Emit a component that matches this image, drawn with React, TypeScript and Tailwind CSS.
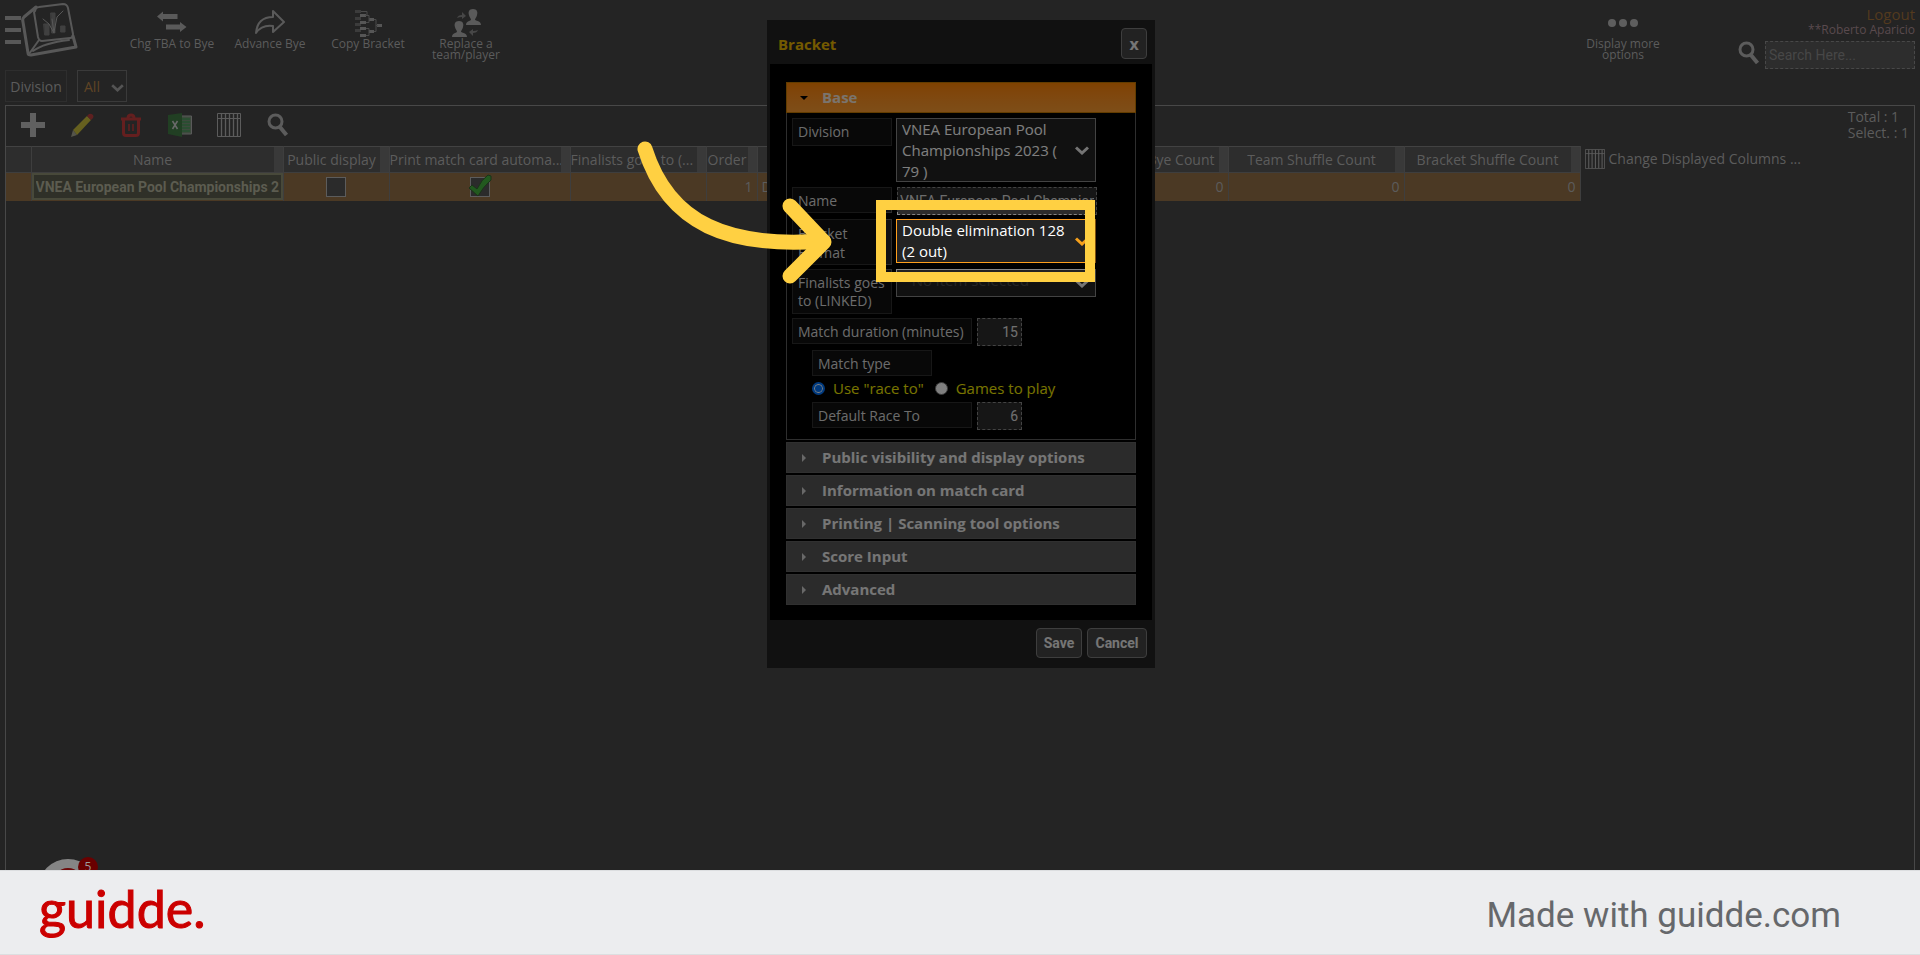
import React from 'react';

type IconProps = { className?: string };

function KeycapLogo() {
  return (
    <svg viewBox="0 0 78 58" className="h-[58px] w-[78px]" fill="none" stroke="#585858" strokeLinejoin="round" strokeLinecap="round">
      <path d="M5 18H21M5 30H21M5 42H21" strokeWidth="4" strokeLinecap="butt" />
      <path d="M35 11Q36 7 39 7L63 4Q67 4 68 8L73 34Q73 38 70 38L42 41Q39 41 38 37L34 12Z" strokeWidth="2" />
      <path d="M36 7L24 17Q22 19 23 22L28 53Q28 55 31 55L76 47L73 36" strokeWidth="3" />
      <path d="M39 40L29 54M33 51Q44 43 69 40" strokeWidth="2" />
      <path d="M44 24h5v11h-4zM51 13h4v20h-3zM61 26h4v6h-4z" fill="#404040" stroke="#404040" strokeWidth="1" />
      <path d="M43 19L49 24L54 33L52 19M54 32L57 17L63 11" strokeWidth="1" />
    </svg>
  );
}

function SwapIcon() {
  return (
    <svg viewBox="0 0 30 30" className="h-[30px] w-[30px]" fill="#5a5a5a">
      <path d="M0 8.500L6 3.500V6H20.500V11H6V13.500ZM29.500 19L23 14V16.500H9V21.500H23V24Z" />
    </svg>
  );
}

function AdvanceIcon() {
  return (
    <svg viewBox="0 0 30 30" className="h-[30px] w-[30px]" fill="none" stroke="#5a5a5a" strokeWidth="2" strokeLinejoin="round">
      <path d="M1 25C2 14 8 9 18 9V3L29 14L18 24V18C10 17 5 19 1 25Z" />
    </svg>
  );
}

function CopyBracketIcon() {
  return (
    <svg viewBox="0 0 30 30" className="h-[30px] w-[30px]">
      <path d="M2 2h6v3H2zM2 9h6v3H2zM2 15h6v3H2zM2 21h6v3H2z" fill="#3c3c3c" />
      <path d="M7 6h6v3H7zM7 13h6v3H7zM7 19h6v3H7zM7 26h6v3H7zM16 10h5v3h-5zM16 22h5v3h-5zM24 16h5v3h-5z" fill="#565656" />
      <path d="M8 3.500h6v4h-2M13 7.500h3v7h-3M13 20.500h3v7h-3M16 11h1M21 11.500h2v12h-2M23 17.500h2" fill="none" stroke="#4a4a4a" />
    </svg>
  );
}

function ReplaceIcon() {
  return (
    <svg viewBox="0 0 30 30" className="h-[30px] w-[30px]" fill="#5a5a5a">
      <path d="M22 1C26 1 27 4 26 7C26 9 24 10 24 12C26 13 30 13 30 17H15C15 13 19 13 20 12C20 10 18 9 18 7C17 4 18 1 22 1Z" />
      <path d="M8 13C12 13 13 16 12 19C12 21 10 22 10 24C12 25 16 25 16 29H1C1 25 5 25 6 24C6 22 4 21 4 19C3 16 4 13 8 13Z" />
      <path d="M6 10Q7 7 11 7V4L15 8L11 11V9Q8 9 6 10ZM27 22Q26 25 22 25V28L18 24L22 21V23Q25 23 27 22Z" fill="#474747" />
    </svg>
  );
}

function DotsIcon() {
  return (
    <svg viewBox="0 0 30 30" className="h-[30px] w-[30px]" fill="#5e5e5e">
      <circle cx="4" cy="15" r="4" />
      <circle cx="15" cy="15" r="4" />
      <circle cx="26" cy="15" r="4" />
    </svg>
  );
}

function SearchIcon({ className }: IconProps) {
  return (
    <svg viewBox="0 0 24 24" className={className} fill="none" stroke="#5c5c5c">
      <circle cx="9.500" cy="8.500" r="6.500" strokeWidth="3" />
      <path d="M13.500 13.500L20.500 22" strokeWidth="4" />
    </svg>
  );
}

function ColumnsIcon({ className }: IconProps) {
  return (
    <svg viewBox="0 0 24 24" className={className} fill="none" stroke="#5c5c5c">
      <path d="M.5.5h23v23H.5zM.5 5.500h23" />
      <path d="M4.500 1v22M8.500 1v22M12.500 1v22M16.500 1v22M20.500 1v22" strokeWidth="1.300" />
    </svg>
  );
}

function PlusIcon() {
  return (
    <svg viewBox="0 0 24 24" className="size-6" fill="#606060">
      <path d="M9 0h6v9h9v6h-9v9H9v-9H0V9h9z" />
    </svg>
  );
}

function PencilIcon() {
  return (
    <svg viewBox="0 0 24 24" className="size-6">
      <path d="M3 17L17 3L21 7L7 22Z" fill="#66601f" />
      <path d="M17 3L19 1Q21 0 23 2Q24 3 23 5L21 7Z" fill="#5e2020" />
      <path d="M3 17L7 22L1 24Z" fill="#55554a" />
    </svg>
  );
}

function TrashIcon() {
  return (
    <svg viewBox="0 0 24 24" className="size-6" fill="none" stroke="#641f1f">
      <path d="M2 6H22" strokeWidth="3" />
      <path d="M9 5C9 1 15 1 15 5M4.500 7V20Q4.500 22.500 7 22.500H17Q19.500 22.500 19.500 20V7" strokeWidth="3" />
      <path d="M10 11v7M14 11v7" strokeWidth="1.500" />
    </svg>
  );
}

function ExcelIcon() {
  return (
    <svg viewBox="0 0 24 24" className="size-6">
      <path d="M13 3h10.500v18H13z" fill="#3d4a3d" stroke="#5a5a5a" />
      <path d="M14 6h8M14 9h8M14 12h8M14 15h8M14 18h8" stroke="#26502f" strokeWidth="1.500" />
      <path d="M0 2L14 0V24L0 21Z" fill="#213f23" />
      <path d="M4.500 8L9.500 16M9.500 8L4.500 16" stroke="#6a6a6a" strokeWidth="1.500" />
    </svg>
  );
}

function Chevron({ className }: IconProps) {
  return (
    <svg viewBox="0 0 14 9" className={className} fill="none" stroke="currentColor" strokeWidth="3">
      <path d="M1 1.500L7 7L13 1.500" />
    </svg>
  );
}

const actions = [
  { label: 'Chg TBA to Bye', icon: <SwapIcon /> },
  { label: 'Advance Bye', icon: <AdvanceIcon /> },
  { label: 'Copy Bracket', icon: <CopyBracketIcon /> },
  { label: 'Replace a team/player', icon: <ReplaceIcon /> },
];

const tools = [
  { label: 'Add', icon: <PlusIcon /> },
  { label: 'Edit', icon: <PencilIcon /> },
  { label: 'Delete', icon: <TrashIcon /> },
  { label: 'Export to Excel', icon: <ExcelIcon /> },
  { label: 'Columns', icon: <ColumnsIcon className="size-6" /> },
  { label: 'Search', icon: <SearchIcon className="size-6" /> },
];

const closedSections = [
  'Public visibility and display options',
  'Information on match card',
  'Printing | Scanning tool options',
  'Score Input',
  'Advanced',
];

function TopBar() {
  return (
    <header className="flex h-[70px] items-start pr-[5px]">
      <a href="#home" aria-label="Home" className="shrink-0">
        <KeycapLogo />
      </a>
      <nav className="ml-[45px] flex pt-2">
        {actions.map((a) => (
          <button key={a.label} className="flex w-[98px] flex-col items-center text-[12px] leading-[11px] text-[#5c5c5c]">
            {a.icon}
            <span className="max-w-[90px]">{a.label}</span>
          </button>
        ))}
      </nav>
      <button className="ml-auto mr-[65px] flex w-[98px] flex-col items-center pt-2 text-[12px] leading-[11px] text-[#5c5c5c]">
        <DotsIcon />
        <span className="w-20">Display more options</span>
      </button>
      <div className="flex flex-col items-end pt-[5px]">
        <a href="#logout" className="text-[15px] leading-[18px] text-[#533a1e]">Logout</a>
        <span className="text-[12px] leading-[14px] text-[#5a4a4e]">**Roberto Aparicio</span>
        <div className="mt-1 flex items-start gap-1">
          <SearchIcon className="h-6 w-6" />
          <input
            type="search"
            aria-label="Search"
            placeholder="Search Here..."
            className="h-7 w-[150px] border border-dashed border-[#484848] bg-[#2d2d2d] px-[3px] font-[Roboto,sans-serif] text-[14px] placeholder:text-[#474747]"
          />
        </div>
      </div>
    </header>
  );
}

function HeadCell({ children, className = 'justify-center' }: { children?: React.ReactNode; className?: string }) {
  return (
    <th className="border-r border-[#3e3e3e] bg-[#2d2d2d] p-0 font-normal">
      <div className={`flex h-[25px] items-center overflow-hidden border-r-[9px] border-[#393939] whitespace-nowrap ${className}`}>
        {children}
      </div>
    </th>
  );
}

function BracketTable() {
  return (
    <table className="w-[1574px] shrink-0 table-fixed border-collapse border-t border-[#424242] text-[14px] text-[#5c5c5c]">
      <colgroup>
        <col className="w-[25px]" />
        <col className="w-[252px]" />
        <col className="w-[106px]" />
        <col className="w-[181px]" />
        <col className="w-[136px]" />
        <col className="w-[51px]" />
        <col className="w-[295px]" />
        <col className="w-[176px]" />
        <col className="w-[176px]" />
        <col className="w-[176px]" />
      </colgroup>
      <thead>
        <tr className="border-b border-[#3e3e3e]">
          <th aria-label="Row" className="border-r border-[#3e3e3e] bg-[#2d2d2d] p-0" />
          <HeadCell>Name</HeadCell>
          <HeadCell>Public display</HeadCell>
          <HeadCell className="justify-start">Print match card automa...</HeadCell>
          <HeadCell className="justify-start">Finalists goes to (...</HeadCell>
          <HeadCell>Order</HeadCell>
          <HeadCell>Format</HeadCell>
          <HeadCell className="justify-end pr-1">Bye Count</HeadCell>
          <HeadCell>Team Shuffle Count</HeadCell>
          <HeadCell>Bracket Shuffle Count</HeadCell>
        </tr>
      </thead>
      <tbody>
        <tr className="h-7 bg-[#4b3924] text-right">
          <td className="border-r border-[#3e3e3e] p-0" />
          <td className="border-r border-[#3e3e3e] p-0">
            <input
              aria-label="Name"
              defaultValue="VNEA European Pool Championships 2023"
              className="block h-[27px] w-full border-2 border-[#48493a] bg-[#2f3028] px-[2px] font-[Roboto,sans-serif] text-[14px] font-bold text-[#5c5c50]"
            />
          </td>
          <td className="border-r border-[#3e3e3e] p-0">
            <input type="checkbox" aria-label="Public display" className="mx-auto block size-5 appearance-none border border-[#5c5c5c] bg-[#2b2b2b]" />
          </td>
          <td className="border-r border-[#3e3e3e] p-0">
            <div className="relative mx-auto size-5">
              <input type="checkbox" defaultChecked aria-label="Print match card" className="block size-5 appearance-none border border-[#5c5c5c] bg-[#2b2b2b]" />
              <svg viewBox="0 0 24 24" className="pointer-events-none absolute -top-[3px] -left-[2px] size-6">
                <path d="M1 14L4 11L9 15Q14 5 20 1L23 2L23 6Q15 13 10 22Z" fill="#22591f" stroke="#1b3319" />
              </svg>
            </div>
          </td>
          <td className="border-r border-[#3e3e3e] p-0" />
          <td className="border-r border-[#3e3e3e] px-1 py-0">1</td>
          <td className="border-r border-[#3e3e3e] px-1 py-0 text-left">DE</td>
          <td className="border-r border-[#3e3e3e] px-1 py-0">0</td>
          <td className="border-r border-[#3e3e3e] px-1 py-0">0</td>
          <td className="border-r border-[#3e3e3e] px-1 py-0">0</td>
        </tr>
      </tbody>
    </table>
  );
}

const selectBase =
  'block w-[200px] border px-[5px] pr-[30px] text-[15px] leading-[21px] whitespace-normal [appearance:base-select] [&::picker-icon]:hidden';

function SelectField(props: { id: string; value: string; active?: boolean; empty?: boolean; className: string }) {
  return (
    <div className="relative w-[200px]">
      <select
        id={props.id}
        className={`${selectBase} ${props.className} ${props.active ? 'border-[#ff9f1c] bg-[#232323]' : 'border-[#868686] bg-[#232323]'} ${props.empty ? 'text-[#4a4a4a]' : 'text-white'}`}
      >
        <option>{props.value}</option>
      </select>
      <div className={`pointer-events-none absolute inset-y-0 right-[7px] flex items-center ${props.active ? 'text-[#f5a01c]' : 'text-[#e8e8e8]'}`}>
        <Chevron className="h-[9px] w-[14px]" />
      </div>
    </div>
  );
}

const fieldLabel = 'border border-[#2e2e2e] bg-[#111] px-[5px] text-[14px] text-[#d8d8d8]';
const numberInput =
  'ml-[5px] h-7 w-[45px] border border-dashed border-[#868686] bg-[#2c2c2c] px-[3px] text-right font-[Roboto,sans-serif] text-[14px] text-[#e0e0e0]';

function BaseSection() {
  return (
    <div className="flex flex-col border border-t-0 border-[#5c5c5c] px-[5px] pt-[5px] pb-[9px]">
      <div className="flex items-start gap-1">
        <label htmlFor="division" className={`${fieldLabel} h-7 w-[100px] leading-[26px]`}>Division</label>
        <SelectField id="division" value="VNEA European Pool Championships 2023 ( 79 )" className="h-16" />
      </div>
      <div className="mt-[5px] flex items-start gap-[5px]">
        <label htmlFor="name" className={`${fieldLabel} h-[26px] w-[100px] leading-[26px]`}>Name</label>
        <input
          id="name"
          defaultValue="VNEA European Pool Championships 2023"
          className="h-7 w-[200px] border border-dashed border-[#868686] bg-[#2c2c2c] px-[2px] font-[Roboto,sans-serif] text-[14px] text-[#d8d8d8]"
        />
      </div>
      <div className="mt-1 flex items-start gap-1">
        <label htmlFor="format" className={`${fieldLabel} h-[46px] w-[100px] py-1 pr-4 leading-[19px]`}>Bracket Format</label>
        <SelectField id="format" active value="Double elimination 128 (2 out)" className="h-11" />
      </div>
      <div className="mt-1 flex items-start gap-1">
        <label htmlFor="finalists" className={`${fieldLabel} h-[45px] w-[100px] py-1 pr-0 leading-[18px]`}>Finalists goes to (LINKED)</label>
        <SelectField id="finalists" empty value="--No item selected--" className="h-7" />
      </div>
      <div className="mt-1 flex items-start">
        <label htmlFor="duration" className={`${fieldLabel} h-[26px] w-[180px] leading-[26px]`}>Match duration (minutes)</label>
        <input id="duration" defaultValue="15" className={numberInput} />
      </div>
      <fieldset className="mt-1 pl-5">
        <legend className={`${fieldLabel} h-[26px] w-[120px] leading-[26px]`}>Match type</legend>
        <div className="mb-[2px] flex h-6 items-center text-[15px] text-[#f0e800]">
          <label className="flex items-center gap-2">
            <input type="radio" name="match-type" defaultChecked className="size-[13px] appearance-none rounded-full border-2 border-[#0075ff] bg-[#0075ff] shadow-[inset_0_0_0_1px_white]" />
            Use "race to"
          </label>
          <label className="ml-[11px] flex items-center gap-2">
            <input type="radio" name="match-type" className="size-[13px] appearance-none rounded-full border border-[#767676] bg-white" />
            Games to play
          </label>
        </div>
      </fieldset>
      <div className="flex items-start pl-5">
        <label htmlFor="race" className={`${fieldLabel} h-[26px] w-[160px] leading-[26px]`}>Default Race To</label>
        <input id="race" defaultValue="6" className={numberInput} />
      </div>
    </div>
  );
}

function BracketDialog() {
  return (
    <div role="dialog" aria-label="Bracket" className="relative w-[388px] overflow-hidden bg-[#222] px-[3px]">
      <div className="flex h-11 items-start justify-between pt-2 pr-[5px] pl-2">
        <h2 className="pt-[6px] text-[15px] leading-5 font-bold text-[#e8b400]">Bracket</h2>
        <button aria-label="Close" className="h-[31px] w-[26px] rounded-[4px] border border-[#7c7c7c] bg-[#444] text-[16px] leading-none font-bold text-[#ececec]">
          x
        </button>
      </div>
      <div className="flex flex-col gap-[2px] bg-black px-4 pt-[18px] pb-[15px]">
        <section>
          <button className="flex h-[31px] w-full items-center border border-[#c47800] bg-linear-to-b from-[#ff8400] to-[#fc9c30] text-[15px] font-bold text-[#f4e9dc]">
            <svg viewBox="0 0 8 4" className="mr-[14px] ml-[13px] h-1 w-2 fill-black">
              <path d="M0 0H8L4 4Z" />
            </svg>
            Base
          </button>
          <BaseSection />
        </section>
        {closedSections.map((title) => (
          <button key={title} className="flex h-[31px] w-full items-center border border-[#606060] bg-[#565656] text-[15px] font-bold text-[#ececec]">
            <svg viewBox="0 0 4 8" className="mr-4 ml-[15px] h-2 w-1 fill-[#d0d0d0]">
              <path d="M0 0V8L4 4Z" />
            </svg>
            {title}
          </button>
        ))}
      </div>
      <div className="flex h-12 justify-end gap-[5px] pt-2 pr-[5px]">
        <button className="h-[30px] w-[46px] rounded-[4px] border border-[#7c7c7c] bg-[#444] font-[Roboto,sans-serif] text-[14px] font-bold text-[#ececec]">Save</button>
        <button className="h-[30px] w-[60px] rounded-[4px] border border-[#7c7c7c] bg-[#444] font-[Roboto,sans-serif] text-[14px] font-bold text-[#ececec]">Cancel</button>
      </div>
      {/* spotlight around the bracket format field */}
      <div className="pointer-events-none absolute top-[180px] left-[109px] h-[82px] w-[219px] border-10 border-[#ffd042] shadow-[0_0_0_900px_rgba(0,0,0,0.5)]" />
    </div>
  );
}

function Pointer() {
  return (
    <svg viewBox="0 0 200 150" className="pointer-events-none absolute top-[117px] -left-[132px] h-[150px] w-[200px]" fill="none" stroke="#ffd042" strokeWidth="15" strokeLinecap="round" strokeLinejoin="round">
      <path d="M10 12C34 88 95 111 188 104" />
      <path d="M155 69L189 105L155 139" />
    </svg>
  );
}

export default function App() {
  return (
    <div className="relative flex min-h-screen flex-col overflow-hidden bg-[#242424] font-[Open_Sans,Noto_Sans,sans-serif]">
      <TopBar />
      <div className="flex gap-[10px] pl-[5px] text-[14px]">
        <label htmlFor="division-filter" className="h-8 w-[62px] border border-[#2e2e2e] text-center leading-8 text-[#5c5c5c]">Division</label>
        <div className="relative">
          <select id="division-filter" className="h-8 w-[50px] appearance-none border border-[#3a3a3a] pl-[6px] text-[#604424]">
            <option>All</option>
          </select>
          <Chevron className="pointer-events-none absolute top-[14px] right-[3px] h-2 w-[13px] text-[#545454]" />
        </div>
      </div>
      <main className="mx-[5px] mt-[3px] flex flex-1 flex-col border border-b-0 border-[#484848]">
        <div className="flex h-10 items-start justify-between">
          <div className="flex gap-[25px] pt-[7px] pl-[15px]">
            {tools.map((t) => (
              <button key={t.label} aria-label={t.label}>{t.icon}</button>
            ))}
          </div>
          <div className="pt-[3px] pr-[5px] text-[14px] leading-4 text-[#5c5c5c]">
            <p>Total : 1</p>
            <p>Select. : 1</p>
          </div>
        </div>
        <div className="flex items-start">
          <BracketTable />
          <button className="mt-[3px] ml-1 flex items-center gap-1 text-[14px] leading-5 whitespace-nowrap text-[#5c5c5c]">
            <ColumnsIcon className="size-5" />
            Change Displayed Columns ...
          </button>
        </div>
      </main>

      <div className="absolute bottom-9 left-[38px] size-[60px] overflow-hidden rounded-full bg-[#858585]">
        <div className="mx-auto mt-[9px] size-8 rounded-full border-[6px] border-[#6c0a0a]" />
      </div>
      <span className="absolute bottom-[78px] left-[78px] size-5 rounded-full bg-[#6a0000] text-center text-[12px] leading-5 text-[#9c9c9c]">5</span>

      <footer className="relative flex h-[85px] items-center justify-between border-t border-b border-t-[#dcdee0] border-b-[#dcdee0] bg-[#ecedef] pr-[79px] pl-[39px]">
        <a href="#guidde" className="pb-[10px] font-[Lato,sans-serif] text-[52px] leading-none text-[#cb0000] [-webkit-text-stroke:1px_#cb0000]">guidde.</a>
        <span className="pt-[6px] font-[Roboto,sans-serif] text-[35px] leading-none text-[#66686b]">Made with guidde.com</span>
      </footer>

      <div className="absolute top-5 left-1/2 -ml-[193px]">
        <BracketDialog />
        <Pointer />
      </div>
    </div>
  );
}
